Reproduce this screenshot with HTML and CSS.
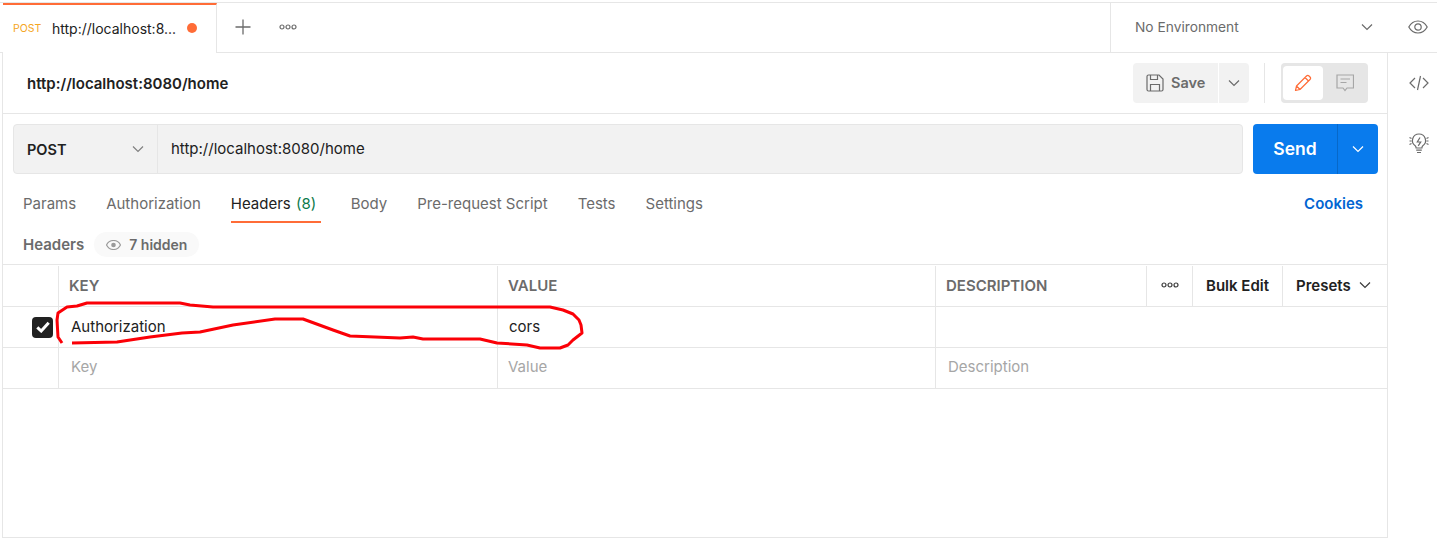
FILE: index.html
```html
<!DOCTYPE html>
<html lang="en">
<head>
<meta charset="utf-8">
<title>Postman request</title>
<link rel="stylesheet" href="styles.css">
</head>
<body>
<div class="app">
  <div class="topbar">
    <div class="tab">
      <span class="tab-method">POST</span>
      <span class="tab-title">http://localhost:8...</span>
      <span class="tab-dot"></span>
    </div>
    <div class="tab-actions">
      <svg class="ic-plus" width="16" height="16" viewBox="0 0 16 16"><path d="M8 0.5v15M0.5 8h15" stroke="#6b6b6b" stroke-width="1.3" fill="none"/></svg>
      <svg class="ic-dots" width="18" height="6" viewBox="0 0 18 6"><g fill="none" stroke="#6b6b6b" stroke-width="1.2"><circle cx="3" cy="3" r="2"/><circle cx="9" cy="3" r="2"/><circle cx="15" cy="3" r="2"/></g></svg>
    </div>
    <div class="env">
      <span class="env-name">No Environment</span>
      <svg width="12" height="8" viewBox="0 0 12 8"><path d="M1 1.5l5 5 5-5" stroke="#6b6b6b" stroke-width="1.2" fill="none"/></svg>
    </div>
    <div class="env-eye">
      <svg width="20" height="14" viewBox="0 0 20 14"><g fill="none" stroke="#6b6b6b" stroke-width="1.2"><path d="M0.8 7C3 3 6 1 10 1s7 2 9.200 6C17 11 14 13 10 13S3 11 0.800 7z"/><circle cx="10" cy="7" r="3.200"/></g></svg>
    </div>
  </div>

  <div class="body">
    <main class="main">
      <div class="name-row">
        <h1 class="req-name">http://localhost:8080/home</h1>
        <div class="name-actions">
          <div class="save-group">
            <button class="save-btn">
              <svg width="18" height="18" viewBox="0 0 18 18"><g fill="none" stroke="#6b6b6b" stroke-width="1.2"><path d="M1 2.500a1.500 1.500 0 0 1 1.500-1.500H13l4 4v10.500a1.500 1.500 0 0 1-1.500 1.500h-13A1.500 1.500 0 0 1 1 15.500z"/><path d="M4.500 1v4.500h7V1M4.500 17v-6.500h9V17"/></g></svg>
              <span class="save-label">Save</span>
            </button>
            <button class="save-more">
              <svg width="12" height="8" viewBox="0 0 12 8"><path d="M1 1.500l5 5 5-5" stroke="#6b6b6b" stroke-width="1.2" fill="none"/></svg>
            </button>
          </div>
          <span class="vline"></span>
          <div class="mode-toggle">
            <span class="mode mode-on">
              <svg width="18" height="18" viewBox="0 0 18 18"><path d="M1.500 16.500l1-4.500L12.500 2a1.800 1.800 0 0 1 2.500 0l1 1a1.800 1.800 0 0 1 0 2.500L6 15.500zM2.500 12l3.500 3.500M11 3.500L14.500 7" fill="none" stroke="#ff6c37" stroke-width="1.200" stroke-linejoin="round"/></svg>
            </span>
            <span class="mode">
              <svg width="18" height="18" viewBox="0 0 18 18"><path d="M1 1h16.500v13H11l-2 2.500L7 14H1z" fill="none" stroke="#a6a6a6" stroke-width="1.200"/><path d="M4.500 5h9.500M4.500 8.500h6" stroke="#a6a6a6" stroke-width="1.200"/></svg>
            </span>
          </div>
        </div>
      </div>

      <div class="url-row">
        <div class="url-box">
          <div class="method">
            <span>POST</span>
            <svg width="12" height="8" viewBox="0 0 12 8"><path d="M1 1.500l5 5 5-5" stroke="#808080" stroke-width="1.200" fill="none"/></svg>
          </div>
          <div class="url-text">http://localhost:8080/home</div>
        </div>
        <div class="send">
          <span class="send-label">Send</span>
          <span class="send-more">
            <svg width="12" height="8" viewBox="0 0 12 8"><path d="M1 1.500l5 5 5-5" stroke="#fff" stroke-width="1.200" fill="none"/></svg>
          </span>
        </div>
      </div>

      <nav class="req-tabs">
        <span class="req-tab">Params</span>
        <span class="req-tab">Authorization</span>
        <span class="req-tab req-tab-on">Headers <em class="count">(8)</em></span>
        <span class="req-tab">Body</span>
        <span class="req-tab">Pre-request Script</span>
        <span class="req-tab">Tests</span>
        <span class="req-tab">Settings</span>
        <span class="cookies">Cookies</span>
      </nav>

      <div class="hdr-row">
        <span class="hdr-title">Headers</span>
        <span class="hidden-pill">
          <svg width="15" height="10" viewBox="0 0 15 10"><path d="M0.500 5C2 2 4.500 0.500 7.500 0.500S13 2 14.500 5C13 8 10.500 9.500 7.500 9.500S2 8 0.500 5z" fill="none" stroke="#9a9a9a" stroke-width="1.200"/><circle cx="7.500" cy="5" r="2.300" fill="#9a9a9a"/></svg>
          7 hidden
        </span>
      </div>

      <div class="table">
        <div class="thead">
          <div class="cell"></div>
          <div class="cell th">KEY</div>
          <div class="cell th">VALUE</div>
          <div class="cell th">DESCRIPTION</div>
          <div class="cell th-center">
            <svg width="18" height="6" viewBox="0 0 18 6"><g fill="none" stroke="#3a3a3a" stroke-width="1.200"><circle cx="3" cy="3" r="2"/><circle cx="9" cy="3" r="2"/><circle cx="15" cy="3" r="2"/></g></svg>
          </div>
          <div class="cell th-strong th-center">Bulk Edit</div>
          <div class="cell th-strong th-presets">Presets
            <svg width="12" height="8" viewBox="0 0 12 8"><path d="M1 1.500l5 5 5-5" stroke="#3a3a3a" stroke-width="1.200" fill="none"/></svg>
          </div>
        </div>
        <div class="trow">
          <div class="cell cell-check">
            <span class="check">
              <svg width="14" height="12" viewBox="0 0 14 12"><path d="M1.300 6.300l3.900 3.700L12.700 1.800" fill="none" stroke="#fff" stroke-width="3"/></svg>
            </span>
          </div>
          <div class="cell td">Authorization</div>
          <div class="cell td td-value">cors</div>
          <div class="cell td span-rest"></div>
        </div>
        <div class="trow">
          <div class="cell"></div>
          <div class="cell td ph">Key</div>
          <div class="cell td ph ph-value">Value</div>
          <div class="cell td ph span-rest">Description</div>
        </div>
      </div>
      <div class="rest"></div>
    </main>
    <aside class="side">
      <svg width="20" height="16" viewBox="0 0 20 16"><path d="M6 3L1 8l5 5M14 3l5 5-5 5M11.500 1L8.500 15" fill="none" stroke="#6b6b6b" stroke-width="1.200"/></svg>
      <svg width="20" height="21" viewBox="0 0 20 21"><g fill="none" stroke="#6b6b6b" stroke-width="1.200"><path d="M10 1a6.500 6.500 0 0 0-3.800 11.800c.7.600.9 1.200.9 2.200h5.800c0-1 .2-1.600.9-2.200A6.500 6.500 0 0 0 10 1z"/><path d="M7.200 17.200h5.600M8 19.500h4M11 4.500L8.300 9h3.400l-2.500 3.800"/><path d="M0.500 4.500l2 1M0.500 8h2M0.500 11.500l2-1M19.500 4.500l-2 1M19.500 8h-2M19.500 11.500l-2-1"/></g></svg>
    </aside>
  </div>

  <svg class="scribble" width="1437" height="538" viewBox="0 0 1437 538">
    <path d="M62 343L58 337L57 320L58 313L67 307L77 306L87 303L180 303L190 305L213 307L400 307L497 307L550 307L563 310L573 314L579 320L581 325L582 333L573 340L568 345L560 348L540 348L527 345L497 343L480 339L423 339L413 337L400 338L350 336L333 330L303 319L275 319L233 325L200 332L182 333L150 337L117 342L72 343" fill="none" stroke="#fb0007" stroke-width="3" stroke-linejoin="round" stroke-linecap="butt"/>
  </svg>
</div>
</body>
</html>
```
FILE: styles.css
```css
* { box-sizing: border-box; }
html, body { margin: 0; padding: 0; background: #fff; }
body { font-family: Inter, "Liberation Sans", sans-serif; font-size: 15px; color: #212121; overflow: hidden; }
.app { position: relative; width: 1437px; height: 538px; padding-top: 2px; display: flex; flex-direction: column; }

.topbar { height: 51px; flex: none; display: flex; border-top: 1px solid #e6e6e6; border-bottom: 1px solid #e6e6e6; padding-left: 3px; }
.tab { width: 214px; height: 50px; margin-bottom: -1px; background: #fff; border-top: 2px solid #ff6c37; border-right: 1px solid #e6e6e6; display: flex; align-items: center; padding: 0 19px 2px 10px; }
.tab-method { font-size: 10.500px; color: #f5a623; width: 39px; }
.tab-title { flex: 1; color: #212121; font-size: 14px; white-space: nowrap; }
.tab-dot { width: 10px; height: 10px; border-radius: 50%; background: #ff6c37; }
.tab-actions { flex: 1; display: flex; align-items: center; padding: 0 0 2px 18px; gap: 28px; }
.env { width: 278px; border-left: 1px solid #e6e6e6; display: flex; align-items: center; justify-content: space-between; padding: 0 15px 2px 24px; }
.env-name { color: #6b6b6b; font-size: 13.750px; }
.env-eye { width: 49px; display: flex; align-items: center; justify-content: center; padding-left: 11px; padding-bottom: 2px; }

.body { flex: 1; display: flex; min-height: 0; }
.main { flex: none; border-left: 1px solid #e6e6e6; border-right: 1px solid #e6e6e6; border-bottom: 1px solid #e6e6e6; margin-left: 2px; display: flex; flex-direction: column; width: 1386px; }
.side { flex: 1; display: flex; flex-direction: column; align-items: center; padding: 22px 0 0 12px; gap: 42px; }

.name-row { height: 61px; flex: none; border-bottom: 1px solid #e6e6e6; display: flex; align-items: center; justify-content: space-between; padding: 0 19px 0 24px; }
.req-name { margin: 0; font-size: 15px; font-weight: 600; color: #212121; }
.name-actions { display: flex; align-items: center; }
.save-group { display: flex; gap: 1px; }
.save-btn, .save-more { border: 0; background: #f2f2f2; height: 40px; display: flex; align-items: center; font-family: inherit; padding: 0; }
.save-btn { width: 85px; border-radius: 4px 0 0 4px; gap: 7px; padding-left: 13px; font-size: 14.500px; font-weight: 600; color: #6b6b6b; }
.save-label { padding-bottom: 2px; }
.save-more { width: 30px; border-radius: 0 4px 4px 0; justify-content: center; }
.vline { width: 1px; height: 40px; background: #e6e6e6; margin: 0 16px 0 15px; }
.mode-toggle { width: 87px; height: 40px; background: #e6e6e6; border-radius: 4px; padding: 3px 2px; display: flex; }
.mode { flex: 1; display: flex; align-items: center; justify-content: center; border-radius: 4px; }
.mode-on { background: #fff; flex: none; width: 40px; }

.url-row { height: 50px; flex: none; margin: 10px 9px 0 10px; display: flex; gap: 10px; }
.url-box { flex: 1; display: flex; background: #f2f2f2; border: 1px solid #e6e6e6; border-radius: 4px; }
.method { width: 144px; border-right: 1px solid #e6e6e6; display: flex; align-items: center; justify-content: space-between; padding: 0 13px; font-weight: 600; font-size: 14.500px; color: #212121; }
.url-text { flex: 1; display: flex; align-items: center; padding: 0 0 1px 13px; color: #212121; }
.send { width: 125px; background: #097bed; border-radius: 4px; display: flex; color: #fff; }
.send-label { width: 85px; display: flex; align-items: center; justify-content: center; border-right: 1px solid #0768c9; font-size: 17.500px; font-weight: 600; padding-bottom: 1px; }
.send-more { flex: 1; display: flex; align-items: center; justify-content: center; }

.req-tabs { height: 50px; flex: none; display: flex; align-items: flex-start; padding: 11px 24px 0 20px; gap: 30px; }
.req-tab { color: #6b6b6b; height: 38px; padding-top: 9px; white-space: nowrap; }
.req-tab-on { color: #212121; border-bottom: 2px solid #ff6c37; width: 90px; }
.count { font-style: normal; color: #0b7a4b; margin-left: 1px; }
.cookies { margin-left: auto; color: #0265d2; font-weight: 600; padding-top: 9px; }

.hdr-row { height: 40px; flex: none; display: flex; align-items: flex-start; padding: 8px 0 0 20px; gap: 10px; }
.hdr-title { font-weight: 600; color: #6b6b6b; padding-top: 3px; }
.hidden-pill { height: 25px; display: flex; align-items: center; gap: 8px; padding: 0 12px; background: #f9f9f9; border-radius: 13px; font-size: 14px; font-weight: 600; color: #6b6b6b; }

.table { flex: none; border-top: 1px solid #e6e6e6; }
.thead, .trow { display: grid; grid-template-columns: 56px 439px 438px 211px 46px 90px 1fr; border-bottom: 1px solid #e6e6e6; height: 41px; }
.thead { height: 42px; }
.cell { border-right: 1px solid #e6e6e6; display: flex; align-items: center; padding: 0 10px 2px; white-space: nowrap; }
.cell:last-child { border-right: 0; }
.thead .cell { margin-top: 1px; }
.th { font-weight: 600; color: #6b6b6b; }
.th-center { justify-content: center; padding: 0 0 2px; }
.th-strong { font-weight: 600; color: #212121; }
.th-presets { justify-content: space-between; padding: 0 16px 2px 13px; }
.td { padding-left: 12px; color: #212121; }
.td-value { padding-left: 11px; }
.ph { color: #a6a6a6; padding-bottom: 3px; }
.ph-value { padding-left: 10px; }
.span-rest { grid-column: 4 / -1; }
.cell-check { justify-content: flex-end; padding: 0 5px 0 0; }
.check { width: 21px; height: 21px; background: #212121; border-radius: 4px; display: flex; align-items: center; justify-content: center; }
.rest { flex: 1; }

.scribble { position: absolute; left: 0; top: 0; pointer-events: none; }
```
